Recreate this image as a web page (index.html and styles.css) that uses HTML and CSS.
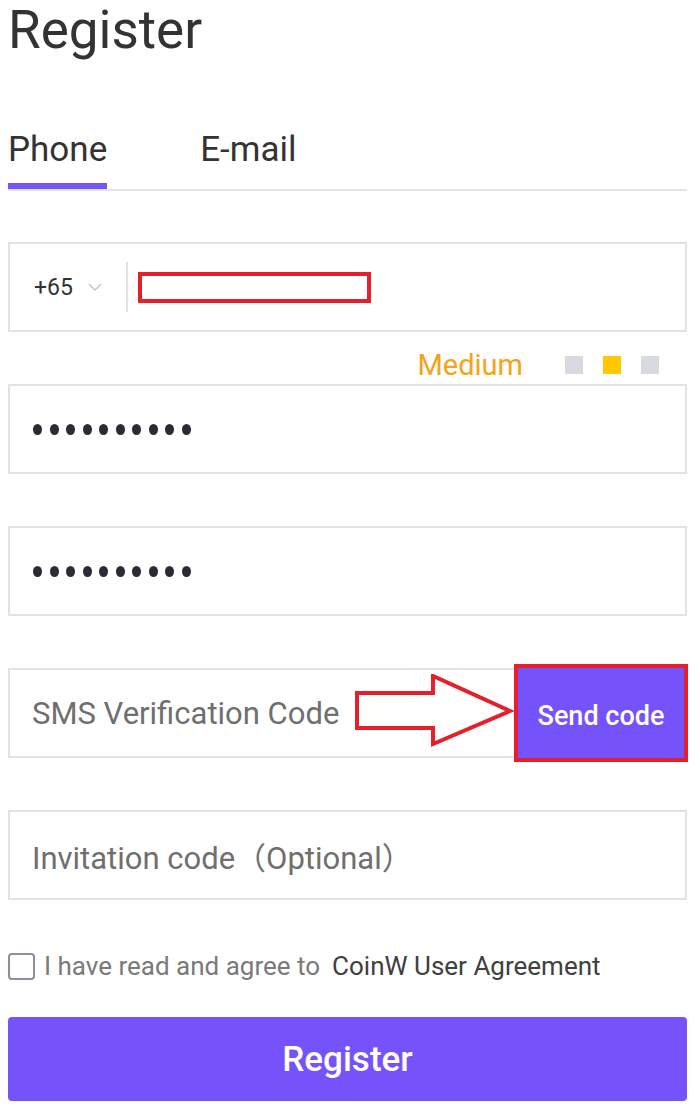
FILE: index.html
```html
<!DOCTYPE html>
<html lang="en">
<head>
    <meta charset="UTF-8">
    <meta name="viewport" content="width=device-width, initial-scale=1.0">
    <title>Register</title>
    <link rel="stylesheet" href="styles.css">
</head>
<body>
    <div class="page">
        <h1 class="title">Register</h1>

        <div class="tabs">
            <div class="tab active">Phone</div>
            <div class="tab">E-mail</div>
        </div>

        <div class="field phone-field">
            <div class="area">
                +65
                <svg class="chevron" width="14" height="8" viewBox="0 0 14 8">
                    <path d="M1 1 L7 7 L13 1" fill="none" stroke="#c4c4d0" stroke-width="1.5"/>
                </svg>
            </div>
            <span class="divider"></span>
            <span class="mark-box"></span>
        </div>

        <div class="strength">
            <span class="strength-label">Medium</span>
            <div class="levels">
                <span class="sq"></span>
                <span class="sq on"></span>
                <span class="sq"></span>
            </div>
        </div>

        <div class="field">
            <div class="dots">
                <i></i><i></i><i></i><i></i><i></i><i></i><i></i><i></i><i></i><i></i>
            </div>
        </div>

        <div class="field">
            <div class="dots">
                <i></i><i></i><i></i><i></i><i></i><i></i><i></i><i></i><i></i><i></i>
            </div>
        </div>

        <div class="field sms-field">
            <span class="placeholder">SMS Verification Code</span>
            <!-- annotation arrow -->
            <svg class="arrow" width="160" height="74" viewBox="0 0 160 74">
                <polygon points="2,19 78,19 78,2 155,37 78,70 78,54 2,54" fill="#fff" stroke="#e3202b" stroke-width="4"/>
            </svg>
            <button class="send-btn">Send code</button>
        </div>

        <div class="field">
            <span class="placeholder">Invitation code（Optional）</span>
        </div>

        <label class="agree">
            <span class="check"></span>
            <span class="agree-text">I have read and agree to</span>
            <span class="agree-link">CoinW User Agreement</span>
        </label>

        <button class="register-btn">Register</button>
    </div>
</body>
</html>
```

FILE: styles.css
```css
body {
    margin: 0;
    font-family: Roboto, "Liberation Sans", "Noto Sans CJK SC", sans-serif;
    color: #333;
    background: #fff;
}
.page {
    width: 679px;
    padding-left: 8px;
}
.title {
    margin: 0;
    font-size: 53px;
    line-height: 60px;
    font-weight: 400;
    color: #333;
}
.tabs {
    display: flex;
    gap: 93px;
    margin-top: 70px;
    border-bottom: 2px solid #e4e4e4;
}
.tab {
    font-size: 35px;
    line-height: 40px;
    padding-bottom: 13px;
    border-bottom: 6px solid transparent;
    color: #333;
}
.tab.active {
    border-bottom-color: #7652fb;
}
.field {
    position: relative;
    display: flex;
    align-items: center;
    height: 90px;
    border: 2px solid #e2e2e2;
    box-sizing: border-box;
}
.phone-field {
    margin-top: 51px;
    padding-left: 24px;
}
.area {
    display: flex;
    align-items: center;
    gap: 15px;
    font-size: 23px;
    color: #333;
}
.divider {
    width: 2px;
    height: 50px;
    margin-left: 24px;
    background: #e2e2e2;
}
.mark-box {
    width: 233px;
    height: 31px;
    margin-left: 10px;
    border: 4px solid #e3202b;
    box-sizing: border-box;
}
.strength {
    display: flex;
    align-items: center;
    justify-content: flex-end;
    height: 38px;
    padding-top: 14px;
    padding-right: 28px;
}
.strength-label {
    font-size: 29px;
    line-height: 28px;
    color: #f5a31a;
    margin-right: 42px;
}
.levels {
    display: flex;
    gap: 20px;
}
.sq {
    width: 18px;
    height: 18px;
    background: #d9d9e1;
}
.sq.on {
    background: #ffc800;
}
.dots {
    display: flex;
    gap: 7.5px;
    padding-left: 23px;
}
.dots i {
    width: 9px;
    height: 11px;
    border-radius: 50%;
    background: #2b2b33;
}
.field + .field {
    margin-top: 52px;
}
.placeholder {
    padding-left: 22px;
    font-size: 31px;
    color: #6f6f6f;
}
.arrow {
    position: absolute;
    left: 345px;
    top: 4px;
}
.send-btn {
    align-self: stretch;
    margin: -2px 1px -2px auto;
    padding-top: 6px;
    width: 166px;
    border: none;
    outline: 4px solid #e3202b;
    background: #7652fb;
    color: #fff;
    font-family: inherit;
    font-size: 27px;
    font-weight: 500;
}
.agree {
    display: flex;
    align-items: center;
    height: 26px;
    margin-top: 53px;
    font-size: 26px;
}
.check {
    width: 27px;
    height: 27px;
    border: 2px solid #8d8d9b;
    border-radius: 4px;
    box-sizing: border-box;
    margin-right: 9px;
}
.agree-text {
    color: #7a7a7a;
    margin-right: 12px;
}
.agree-link {
    color: #404040;
}
.register-btn {
    display: block;
    width: 100%;
    height: 84px;
    margin-top: 38px;
    border: none;
    border-radius: 4px;
    background: #7652fb;
    color: #fff;
    font-family: inherit;
    font-size: 35px;
    font-weight: 500;
}
```
